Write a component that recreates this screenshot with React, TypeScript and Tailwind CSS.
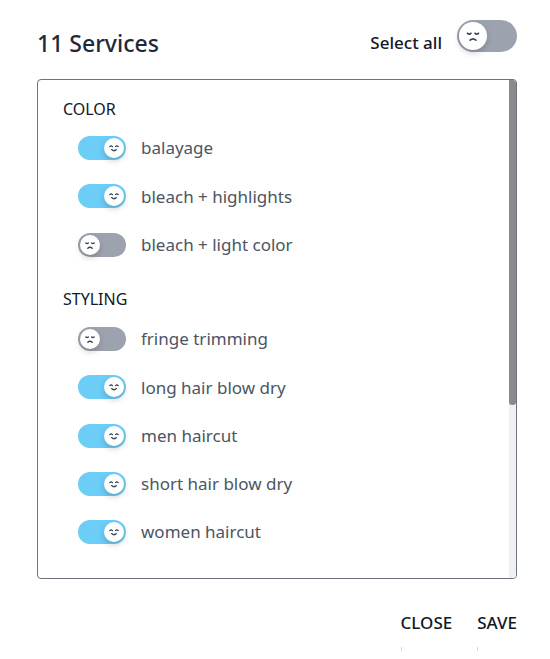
import React from "react";

const Face = ({ happy, size }: { happy: boolean; size: number }) => (
  <svg width={size} height={size} viewBox="0 0 20 20" fill="none" stroke="#374151" strokeWidth={1.3} strokeLinecap="round">
    {happy ? (
      <>
        <path d="M5.8 8.6 Q7.1 7.2 8.4 8.6" />
        <path d="M11.6 8.6 Q12.9 7.2 14.2 8.6" />
        <path d="M7.6 11.6 Q10 13.8 12.4 11.6" />
      </>
    ) : (
      <>
        <path d="M5.8 7.9 Q7.1 9.1 8.4 7.9" />
        <path d="M11.6 7.9 Q12.9 9.1 14.2 7.9" />
        <path d="M7.8 13.2 Q10 11.2 12.2 13.2" />
      </>
    )}
  </svg>
);

const Toggle = ({ on }: { on: boolean }) => (
  <div
    className={`flex h-[24px] w-[48px] shrink-0 items-center rounded-full px-[2px] ${
      on ? "justify-end bg-[#6ccdf7]" : "justify-start bg-[#9ca3af]"
    }`}
  >
    <div className="flex h-[20px] w-[20px] items-center justify-center rounded-full bg-white shadow-[0_3px_6px_rgba(0,0,0,0.18)]">
      <Face happy={on} size={20} />
    </div>
  </div>
);

const sections = [
  {
    title: "COLOR",
    items: [
      { name: "balayage", on: true },
      { name: "bleach + highlights", on: true },
      { name: "bleach + light color", on: false },
    ],
  },
  {
    title: "STYLING",
    items: [
      { name: "fringe trimming", on: false },
      { name: "long hair blow dry", on: true },
      { name: "men haircut", on: true },
      { name: "short hair blow dry", on: true },
      { name: "women haircut", on: true },
    ],
  },
];

export default function App() {
  return (
    <div
      className="h-[659px] w-[550px] bg-white pl-[37px] pt-[20px]"
      style={{ fontFamily: '"Noto Sans", "Open Sans", sans-serif' }}
    >
      <div className="w-[480px]">
        <div className="flex h-[37px] items-start justify-between">
          <h1 className="mt-[9px] text-[23px] leading-[28px] font-medium text-[#1f2937]">11 Services</h1>
          <div className="flex items-start gap-[15px]">
            <span className="mt-[11px] text-[17px] leading-[24px] font-medium text-[#111827]">Select all</span>
            <div className="flex h-[32px] w-[60px] items-center rounded-full bg-[#9ca3af] px-[2px]">
              <div className="flex h-[28px] w-[28px] items-center justify-center rounded-full bg-white shadow-[0_3px_6px_rgba(0,0,0,0.18)]">
                <Face happy={false} size={26} />
              </div>
            </div>
          </div>
        </div>

        <div className="mt-[22px] flex h-[500px] overflow-hidden rounded-[4px] border border-[#6b7280]">
          <div className="flex-1 pl-[25px] pt-[16px]">
            {sections.map((s, i) => (
              <div key={s.title} className={i > 0 ? "mt-[17px]" : ""}>
                <div className="flex h-[26px] items-center text-[16px] text-[#111827]">{s.title}</div>
                <div className={`flex flex-col ${i > 0 ? "mt-[3px]" : "mt-[2px]"}`}>
                  {s.items.map((it) => (
                    <div key={it.name} className="flex h-[48.3px] items-center gap-[15px] pl-[15px]">
                      <Toggle on={it.on} />
                      <span className="text-[17px] text-[#4b5563]">{it.name}</span>
                    </div>
                  ))}
                </div>
              </div>
            ))}
          </div>
          <div className="flex w-[7px] flex-col bg-[#f0f0f0]">
            <div className="h-[325px] rounded-b-[3px] bg-[#8a8a8a]" />
          </div>
        </div>

        <div className="mt-[30px] flex justify-end gap-[25px]">
          <div className="flex flex-col items-start">
            <span className="text-[17px] leading-[28px] font-medium text-[#111827]">CLOSE</span>
            <span className="mt-[10px] h-[4px] w-[1px] bg-[#d1d5db]" />
          </div>
          <div className="flex flex-col items-start">
            <span className="text-[17px] leading-[28px] font-medium text-[#111827]">SAVE</span>
            <span className="mt-[10px] h-[4px] w-[1px] bg-[#d1d5db]" />
          </div>
        </div>
      </div>
    </div>
  );
}
